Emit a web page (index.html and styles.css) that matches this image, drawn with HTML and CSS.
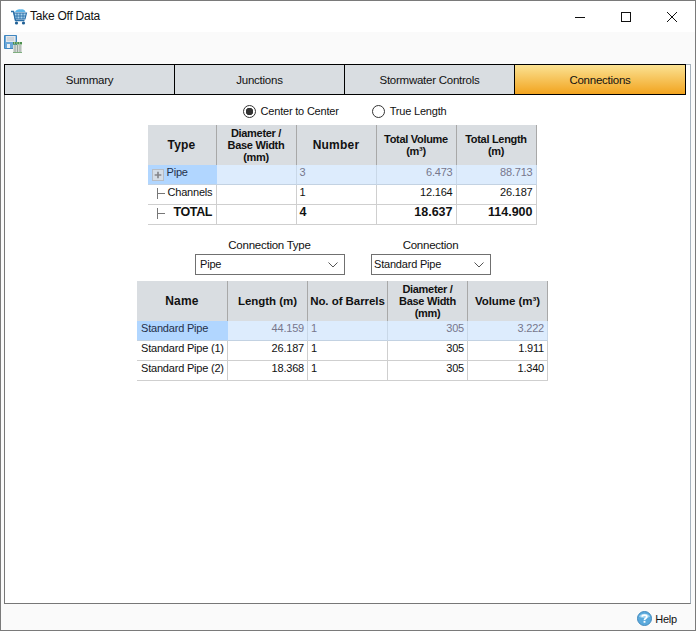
FILE: index.html
```html
<!DOCTYPE html>
<html lang="en">
<head>
<meta charset="utf-8">
<title>Take Off Data</title>
<link rel="stylesheet" href="styles.css">
</head>
<body>
<div class="window">
  <header class="titlebar">
    <svg class="app-icon" width="18" height="18" viewBox="0 0 18 18">
      <path d="M5 4 C6 1.5 9 .8 11 1.5 C13 1 15 2 15.5 4 Z" fill="#5bb5e8"/>
      <path d="M1 3.5 H3.5 L5.5 12.5 H14.5" fill="none" stroke="#2a6fa8" stroke-width="1.4"/>
      <path d="M4 5 H16.5 L15 11 H5.3 Z" fill="#a9d3ee" stroke="#2a6fa8" stroke-width="1.1"/>
      <path d="M7 5 V11 M10 5 V11 M13 5 V11 M4.6 8 H15.8" stroke="#2a6fa8" stroke-width=".9"/>
      <circle cx="6.5" cy="15" r="1.6" fill="#1f5f94"/>
      <circle cx="13.5" cy="15" r="1.6" fill="#1f5f94"/>
    </svg>
    <span class="title">Take Off Data</span>
    <div class="winbtns">
      <svg width="12" height="12" viewBox="0 0 12 12"><path d="M1 6.5 H11" stroke="#111" stroke-width="1"/></svg>
      <svg width="12" height="12" viewBox="0 0 12 12"><rect x="1.5" y="1.5" width="9" height="9" fill="none" stroke="#111" stroke-width="1"/></svg>
      <svg width="12" height="12" viewBox="0 0 12 12"><path d="M1 1 L11 11 M11 1 L1 11" stroke="#111" stroke-width="1"/></svg>
    </div>
  </header>
  <div class="toolbar">
    <svg width="19" height="19" viewBox="0 0 19 19">
      <path d="M.5 .5 H12.5 V13.5 H.5 Z" fill="#6aa7d8" stroke="#3f86c0"/>
      <rect x="2" y="1" width="9.500" height="6" fill="#e4e8ec"/>
      <path d="M3 3 H10 M3 5 H10" stroke="#b9c2ca" stroke-width="1"/>
      <rect x="3" y="9" width="3" height="4" fill="#e8eef3"/>
      <rect x="9" y="7" width="9" height="2.500" fill="#4d8f4d"/>
      <path d="M10 8 h1 M12.500 8 h1 M15 8 h1" stroke="#dff0df" stroke-width="1"/>
      <rect x="9" y="10" width="9" height="7" fill="#d5dbd6"/>
      <path d="M11 10 V17 M13.500 10 V17 M16 10 V17" stroke="#9aa69e" stroke-width="1"/>
      <rect x="9" y="17" width="9" height="1" fill="#7fae7f"/>
    </svg>
  </div>
  <main class="panel">
    <nav class="tabs">
      <div class="tab">Summary</div>
      <div class="tab">Junctions</div>
      <div class="tab">Stormwater Controls</div>
      <div class="tab tab-active">Connections</div>
    </nav>
    <section class="content">
      <div class="radios">
        <label class="radio"><span class="dot dot-on"></span>Center to Center</label>
        <label class="radio"><span class="dot"></span>True Length</label>
      </div>
      <div class="grid grid-one">
        <div class="th th-big">Type</div>
        <div class="th th-tight">Diameter /<br>Base Width<br>(mm)</div>
        <div class="th th-big">Number</div>
        <div class="th th-tight">Total Volume<br>(m³)</div>
        <div class="th th-tight">Total Length<br>(m)</div>

        <div class="td sel-first tree">
          <svg class="plus" width="12" height="12" viewBox="0 0 12 12"><path d="M6 2 V10 M2 6 H10" stroke="#85868c" stroke-width="2"/></svg>Pipe
        </div>
        <div class="td sel"></div>
        <div class="td sel">3</div>
        <div class="td sel num">6.473</div>
        <div class="td sel num">88.713</div>

        <div class="td tree"><svg class="branch" width="8" height="11" viewBox="0 0 8 11"><path d="M.5 0 V11 M1 5.500 H8" stroke="#777" stroke-width="1"/></svg>Channels</div>
        <div class="td"></div>
        <div class="td">1</div>
        <div class="td num">12.164</div>
        <div class="td num">26.187</div>

        <div class="td tree strong strong-label"><svg class="branch branch-wide" width="8" height="11" viewBox="0 0 8 11"><path d="M.5 0 V11 M1 5.500 H8" stroke="#777" stroke-width="1"/></svg>TOTAL</div>
        <div class="td"></div>
        <div class="td strong">4</div>
        <div class="td num strong">18.637</div>
        <div class="td num strong">114.900</div>
      </div>
      <div class="filters">
        <div class="field">
          <span class="field-label">Connection Type</span>
          <div class="combo combo-wide">Pipe<svg width="10" height="6" viewBox="0 0 10 6"><path d="M.5 .5 L5 5 L9.500 .5" fill="none" stroke="#555" stroke-width="1"/></svg></div>
        </div>
        <div class="field">
          <span class="field-label">Connection</span>
          <div class="combo combo-narrow">Standard Pipe<svg width="10" height="6" viewBox="0 0 10 6"><path d="M.5 .5 L5 5 L9.500 .5" fill="none" stroke="#555" stroke-width="1"/></svg></div>
        </div>
      </div>
      <div class="grid grid-two">
        <div class="th th-big">Name</div>
        <div class="th">Length (m)</div>
        <div class="th">No. of Barrels</div>
        <div class="th th-tight">Diameter /<br>Base Width<br>(mm)</div>
        <div class="th">Volume (m³)</div>

        <div class="td sel-first name">Standard Pipe</div>
        <div class="td sel num">44.159</div>
        <div class="td sel">1</div>
        <div class="td sel num">305</div>
        <div class="td sel num">3.222</div>

        <div class="td name">Standard Pipe (1)</div>
        <div class="td num">26.187</div>
        <div class="td">1</div>
        <div class="td num">305</div>
        <div class="td num">1.911</div>

        <div class="td name">Standard Pipe (2)</div>
        <div class="td num">18.368</div>
        <div class="td">1</div>
        <div class="td num">305</div>
        <div class="td num">1.340</div>
      </div>
    </section>
  </main>
  <footer class="statusbar">
    <svg width="15" height="15" viewBox="0 0 16 16">
      <circle cx="8" cy="8" r="7.500" fill="#5aa9dc" stroke="#3f86bb"/>
      <path d="M2 6 A6.500 5 0 0 1 14 6 A8 4 0 0 1 2 6" fill="#9fd2f0"/>
      <path d="M5.500 6 C5.500 3.800 10.500 3.800 10.500 6 C10.500 7.800 8 7.500 8 9.500" fill="none" stroke="#fff" stroke-width="1.800"/>
      <rect x="7" y="10.500" width="2" height="2" fill="#fff"/>
    </svg>
    <span>Help</span>
  </footer>
</div>
</body>
</html>
```
FILE: styles.css
```css
* { box-sizing: border-box; }
html, body { margin: 0; padding: 0; }
body {
  width: 696px;
  height: 631px;
  overflow: hidden;
  font-family: "Liberation Sans", Arial, sans-serif;
  font-size: 11px;
  color: #111;
  letter-spacing: -0.2px;
}
.window {
  width: 696px;
  height: 631px;
  display: flex;
  flex-direction: column;
  border: 1px solid #7a7a7a;
  background: #fafafa;
}
.titlebar {
  height: 31px;
  flex: none;
  display: flex;
  align-items: center;
  background: #fff;
  padding-left: 9px;
}
.app-icon { margin-right: 2px; }
.title { font-size: 12px; letter-spacing: -0.25px; padding-bottom: 2px; }
.winbtns {
  margin-left: auto;
  display: flex;
  gap: 34px;
  padding-right: 17px;
}
.toolbar {
  height: 23px;
  flex: none;
  padding: 3px 0 0 3px;
  background: #fafafa;
}
.panel {
  flex: none;
  height: 540px;
  margin: 9px 4px 0 3px;
  background: #fff;
  border: 1px solid #a6b2bd;
  border-left-color: #777;
  border-bottom-color: #777;
  display: flex;
  flex-direction: column;
}
.tabs {
  display: grid;
  grid-template-columns: 170px 170px 170px 171px;
  height: 31px;
  flex: none;
  border-top: 1px solid #000;
  margin-top: -1px;
  margin-left: -1px;
  border-bottom: 1px solid #000;
  width: 682px;
  border-left: 1px solid #000;
}
.tab {
  display: flex;
  align-items: center;
  justify-content: center;
  background: #d9dde1;
  border-right: 1px solid #000;
  font-size: 11.500px;
  letter-spacing: -0.25px;
}
.tab-active { background: linear-gradient(#fbe293, #f2a41f); }
.content {
  display: flex;
  flex-direction: column;
  align-items: center;
  padding-right: 11px;
}
.radios {
  display: flex;
  gap: 33px;
  height: 30px;
  padding-top: 2px;
  margin-left: 5px;
  align-items: center;
}
.radio {
  display: flex;
  align-items: center;
  gap: 5px;
  font-size: 11px;
}
.dot {
  width: 13px;
  height: 13px;
  border: 1px solid #333;
  border-radius: 50%;
  background: #fff;
}
.dot-on { background: radial-gradient(circle, #333 0 3.500px, #fff 4px); }
.grid {
  display: grid;
  grid-auto-rows: 20px;
  grid-template-rows: 40px;
}
.grid-one { grid-template-columns: 69px 80px 80px 80px 80px; }
.grid-two { grid-template-columns: 91px 80px 80px 80px 80px; margin-right: -1px; }
.th {
  background: #d9dde1;
  border-right: 1px solid #a8a8a8;
  font-weight: 700;
  text-align: center;
  display: flex;
  align-items: center;
  justify-content: center;
  line-height: 12px;
  font-size: 11.500px;
  letter-spacing: -0.05px;
}
.th-big { font-size: 12px; letter-spacing: 0.2px; }
.th-tight { font-size: 11px; letter-spacing: -0.3px; }
.td {
  background: #fff;
  border-right: 1px solid #cfcfcf;
  border-bottom: 1px solid #cfcfcf;
  padding: 0 3px 6px 3px;
  display: flex;
  align-items: center;
  white-space: nowrap;
}
.name { padding-left: 4px; }
.num { justify-content: flex-end; }
.sel { background: #ddecfd; color: #77778c; border-bottom-color: #c3d2e2; border-right-color: #c9d8e8; }
.sel-first { background: #b1d6ff; color: #24304a; border-bottom-color: #c3d2e2; border-right: 0; }
.strong { font-weight: 700; font-size: 12.500px; letter-spacing: 0; }
.strong-label { letter-spacing: -0.4px; }
.tree { padding-left: 4px; }
.plus { flex: none; margin: 6px 3px 0 0; background: #d5dde6; border: 1px solid #b8bdc4; }
.branch { flex: none; margin: 4px 3px 0 5px; }
.branch-wide { margin-right: 9px; }
.filters {
  display: flex;
  gap: 26px;
  margin-top: 13px;
  margin-bottom: 6px;
  margin-left: 2px;
}
.field {
  display: flex;
  flex-direction: column;
  align-items: center;
}
.field-label { height: 16px; line-height: 14px; font-size: 11.500px; letter-spacing: -0.25px; padding-right: 1px; }
.combo {
  height: 21px;
  border: 1px solid #707070;
  background: #fff;
  display: flex;
  align-items: center;
  justify-content: space-between;
  padding: 0 4px 2px 4px;
  font-size: 11px;
}
.combo svg { margin: 2px 2px 0 0; }
.combo-wide { width: 150px; }
.combo-narrow { width: 120px; padding-left: 2px; }
.statusbar {
  flex: 1;
  display: flex;
  justify-content: flex-end;
  align-items: center;
  gap: 3px;
  padding: 3px 18px 0 0;
  font-size: 11px;
}
```
